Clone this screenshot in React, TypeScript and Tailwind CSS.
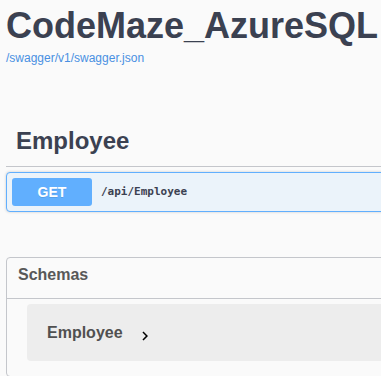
import React from "react";

export default function App() {
  return (
    <div
      className="w-[381px] h-[376px] overflow-hidden bg-[#fafafa]"
      style={{ fontFamily: '"Liberation Sans", Arial, sans-serif' }}
    >
      <div className="w-[600px] pl-[6px] pt-[8px]">
        <h2 className="text-[36px] leading-[36px] font-bold text-[#3b4151] whitespace-nowrap">
          CodeMaze_AzureSQL
        </h2>
        <a className="mt-[6px] block text-[12px] leading-[16px] text-[#4990e2]">
          /swagger/v1/swagger.json
        </a>

        <div className="mt-[63px] border-b border-[#c4c6cb] pl-[10px] pb-[13px]">
          <h3 className="text-[24px] leading-[24px] font-bold text-[#3b4151]">Employee</h3>
        </div>

        <div className="mt-[5px] flex items-center rounded-[4px] border border-[#61affe] bg-[#ebf3fa] p-[5px] shadow-[0_0_3px_rgba(0,0,0,0.19)]">
          <div className="flex h-[28px] w-[80px] items-center justify-center rounded-[3px] bg-[#61affe] text-[14px] font-bold text-white [text-shadow:0_1px_0_rgba(0,0,0,0.1)]">
            GET
          </div>
          <span
            className="ml-[9px] text-[11px] font-semibold text-[#3b4151]"
            style={{ fontFamily: '"DejaVu Sans Mono", "Liberation Mono", monospace' }}
          >
            /api/Employee
          </span>
        </div>

        <div className="mt-[45px] rounded-[4px] border border-[#c4c6cb] pb-[15px]">
          <div className="h-[41px] border-b border-[#c4c6cb] pl-[11px] pt-[7px]">
            <h4 className="text-[16px] leading-[20px] font-bold text-[#585858]">Schemas</h4>
          </div>
          <div className="ml-[20px] mt-[5px] flex h-[57px] items-center rounded-[4px] bg-[#ededed] pl-[20px]">
            <span className="text-[16px] leading-[20px] font-bold text-[#505050]">Employee</span>
            <svg className="ml-[13px] mt-[6px]" width="18" height="18" viewBox="0 0 24 24">
              <path d="M10 6 8.59 7.41 13.17 12l-4.58 4.59L10 18l6-6z" fill="#000" />
            </svg>
          </div>
        </div>
      </div>
    </div>
  );
}
